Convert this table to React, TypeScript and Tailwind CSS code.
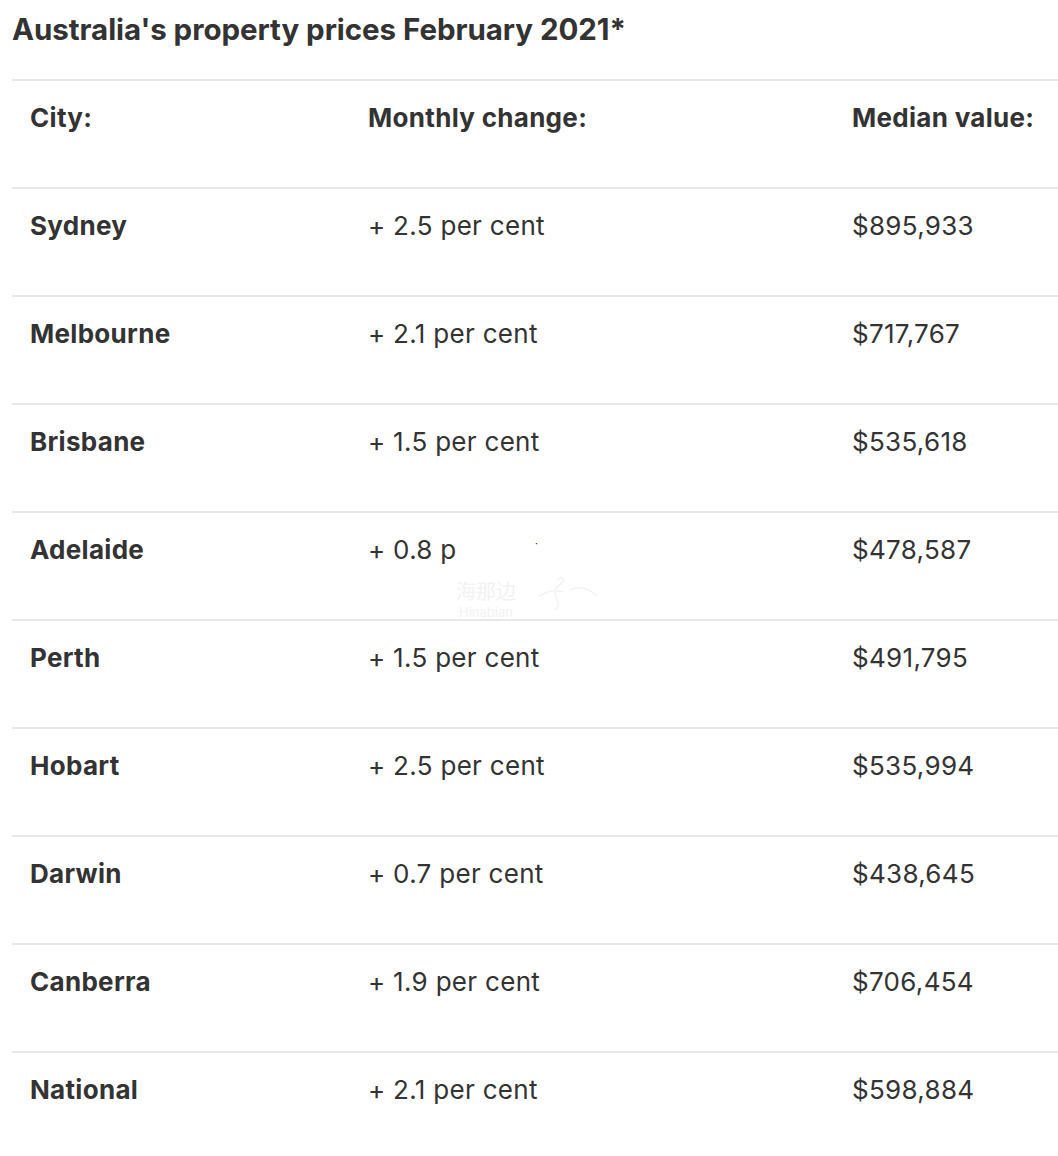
const rows = [
  { city: 'Sydney', change: '+ 2.5 per cent', median: '$895,933' },
  { city: 'Melbourne', change: '+ 2.1 per cent', median: '$717,767' },
  { city: 'Brisbane', change: '+ 1.5 per cent', median: '$535,618' },
  { city: 'Adelaide', change: '+ 0.8 p', median: '$478,587', mark: true },
  { city: 'Perth', change: '+ 1.5 per cent', median: '$491,795' },
  { city: 'Hobart', change: '+ 2.5 per cent', median: '$535,994' },
  { city: 'Darwin', change: '+ 0.7 per cent', median: '$438,645' },
  { city: 'Canberra', change: '+ 1.9 per cent', median: '$706,454' },
  { city: 'National', change: '+ 2.1 per cent', median: '$598,884' },
];

export default function App() {
  return (
    <div className="min-h-[1156px] overflow-hidden bg-white font-['Inter','Liberation_Sans',sans-serif] text-[#333]">
      <h1 className="pl-3 pt-[11px] text-[29.5px] font-bold leading-[36px] tracking-[-0.05px]">
        Australia's property prices February 2021*
      </h1>

      <div className="ml-3 mt-[32px]">
        <div className="grid h-[108px] grid-cols-[338px_484px_1fr] border-t-2 border-[#e8e8e8] pt-[19px] text-[26px] font-bold leading-[36px] tracking-[0.3px]">
          <div className="pl-[18px]">City:</div>
          <div className="pl-[18px]">Monthly change:</div>
          <div className="pl-[18px]">Median value:</div>
        </div>

        {rows.map((r) => (
          <div
            key={r.city}
            className="grid h-[108px] grid-cols-[338px_484px_1fr] border-t-2 border-[#e8e8e8] pt-[19px] text-[26px] leading-[36px] tracking-[0.3px]"
          >
            <div className="pl-[18px] font-bold">{r.city}</div>
            <div className="relative pl-[18px]">
              {r.change}
              {r.mark && (
                <>
                  <span className="absolute left-[185px] top-[6px] text-[10px] leading-none">·</span>
                  <span className="absolute left-[106px] top-[48px] flex flex-col items-center text-[#f2f2f2]">
                    <span className="font-['Noto_Sans_CJK_SC',sans-serif] text-[20px] leading-[22px] tracking-normal">海那边</span>
                    <span className="mt-[3px] text-[13px] leading-[14px] tracking-normal">Hinabian</span>
                  </span>
                  <svg
                    className="absolute left-[185px] top-[40px]"
                    width="66"
                    height="42"
                    viewBox="0 0 66 42"
                    fill="none"
                    stroke="#f0f0f0"
                    strokeWidth="1.2"
                  >
                    <path d="M4 24 C14 18 22 18 28 20" />
                    <path d="M22 8 C26 4 30 6 28 10 C24 14 18 16 20 22 C22 28 26 34 20 38" />
                    <path d="M34 18 C44 14 54 16 62 24" />
                  </svg>
                </>
              )}
            </div>
            <div className="pl-[18px]">{r.median}</div>
          </div>
        ))}
      </div>
    </div>
  );
}
